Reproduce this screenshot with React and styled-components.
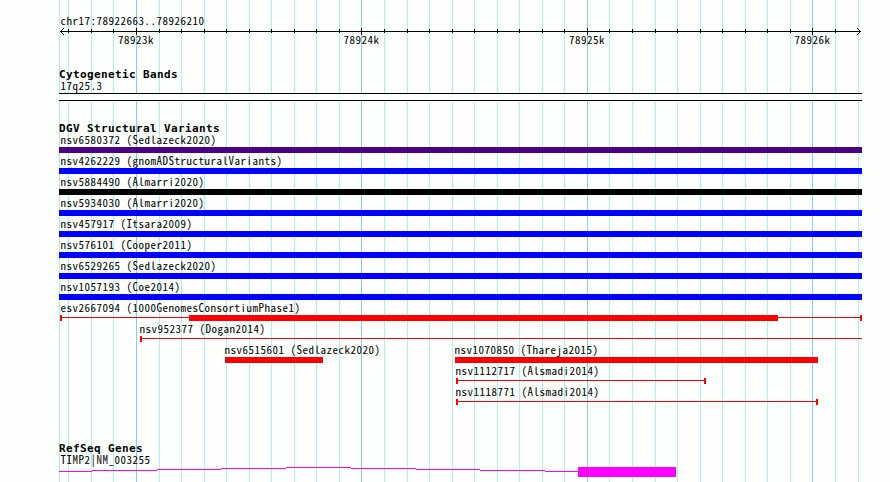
import styled, { createGlobalStyle, css } from 'styled-components';
import React from 'react';

const GlobalStyle = createGlobalStyle`
  body {
    margin: 0;
    background: #fdfffc;
  }
`;

const Browser = styled.div`
  position: relative;
  box-sizing: border-box;
  width: 890px;
  height: 482px;
  padding: 15px 28px 0 59px;
  overflow: hidden;
  background: #fdfffc;
  color: #000;
`;

const GridLines = styled.svg`
  position: absolute;
  top: 0;
  left: 0;
`;

const Content = styled.div`
  position: relative;
`;

const Label = styled.div`
  height: 13px;
  padding-left: 1.6px;
  font-family: 'Noto Sans CJK JP', 'Liberation Mono', monospace;
  font-feature-settings: 'hwid';
  font-size: 11px;
  line-height: 10px;
  letter-spacing: 0.5px;
  white-space: pre;
  ${(props) =>
    props.$shift &&
    css`
      margin-left: ${props.$shift}px;
    `}
`;

const Axis = styled.svg`
  display: block;
`;

const AxisLabels = styled.div`
  display: flex;
  gap: 187.9px;
  height: 13px;
  padding-left: 57.5px;

  ${Label} {
    line-height: 8px;
  }
`;

const Track = styled.section`
  margin-top: ${(props) => props.$top}px;
`;

const Title = styled.h2`
  height: 12px;
  margin: 0;
  font-family: 'DejaVu Sans Mono', monospace;
  font-size: 11px;
  font-weight: bold;
  line-height: 14px;
  letter-spacing: 0.38px;
  white-space: pre;
`;

const Band = styled.div`
  box-sizing: border-box;
  height: 8px;
  border: solid #000;
  border-width: 1px 0;
  background: #fdfffc;
`;

const Row = styled.div`
  display: flex;
  height: 21px;
`;

const Feature = styled.div`
  flex: none;
  width: ${(props) => props.$width}px;
  margin-left: ${(props) => props.$gap}px;
`;

const Glyph = styled.div`
  display: flex;
  height: 6px;
`;

const Bar = styled.div`
  width: ${(props) => props.$width}px;
  height: 6px;
  background: ${(props) => props.$color};
`;

const Line = styled.div`
  width: ${(props) => props.$width}px;
  height: 1px;
  margin-top: 2px;
  background: #f0000a;
`;

const Cap = styled.div`
  width: 2px;
  height: 6px;
  background: #ff0000;
`;

const Gene = styled.svg`
  display: block;
`;

const MAJOR = [136, 361, 587, 812];
const MINOR = [
  68, 91, 113, 159, 181, 204, 226, 249, 271, 294, 316, 339, 384, 407, 429, 452,
  474, 497, 519, 542, 564, 609, 632, 655, 677, 700, 722, 745, 767, 790, 835,
];

const bar = (width, color = '#ff0000') => ({ type: 'bar', width, color });
const line = (width) => ({ type: 'line', width });
const cap = { type: 'cap' };

const full = (name, color) => [
  { name, gap: 0, width: 803, parts: [bar(803, color)] },
];

// gap is the distance from the end of the previous feature in the row
const rows = [
  full('nsv6580372 (Sedlazeck2020)', '#4b0082'),
  full('nsv4262229 (gnomADStructuralVariants)', '#0000ff'),
  full('nsv5884490 (Almarri2020)', '#000000'),
  full('nsv5934030 (Almarri2020)', '#0000ff'),
  full('nsv457917 (Itsara2009)', '#0000ff'),
  full('nsv576101 (Cooper2011)', '#0000ff'),
  full('nsv6529265 (Sedlazeck2020)', '#0000ff'),
  full('nsv1057193 (Coe2014)', '#0000ff'),
  [
    {
      name: 'esv2667094 (1000GenomesConsortiumPhase1)',
      gap: 1,
      width: 802,
      shift: -1,
      parts: [cap, line(127), bar(589), line(82), cap],
    },
  ],
  [
    {
      name: 'nsv952377 (Dogan2014)',
      gap: 81,
      width: 722,
      shift: -2,
      parts: [cap, line(720)],
    },
  ],
  [
    {
      name: 'nsv6515601 (Sedlazeck2020)',
      gap: 166,
      width: 98,
      shift: -2,
      parts: [bar(98)],
    },
    {
      name: 'nsv1070850 (Thareja2015)',
      gap: 132,
      width: 363,
      shift: -2,
      parts: [bar(363)],
    },
  ],
  [
    {
      name: 'nsv1112717 (Alsmadi2014)',
      gap: 397,
      width: 250,
      shift: -2,
      parts: [cap, line(246), cap],
    },
  ],
  [
    {
      name: 'nsv1118771 (Alsmadi2014)',
      gap: 397,
      width: 362,
      shift: -2,
      parts: [cap, line(358), cap],
    },
  ],
];

function Variant({ name, gap, width, shift, parts }) {
  return (
    <Feature $gap={gap} $width={width}>
      <Label $shift={shift}>{name}</Label>
      <Glyph>
        {parts.map((part, i) => {
          if (part.type === 'cap') return <Cap key={i} />;
          if (part.type === 'line') return <Line key={i} $width={part.width} />;
          return <Bar key={i} $width={part.width} $color={part.color} />;
        })}
      </Glyph>
    </Feature>
  );
}

function Ruler() {
  return (
    <>
      <Axis width="803" height="7" shapeRendering="crispEdges">
        <rect x="1" y="3" width="801" height="1" />
        {MINOR.map((x) => (
          <rect key={x} x={x - 59} y="1" width="1" height="4" />
        ))}
        {MAJOR.map((x) => (
          <rect key={x} x={x - 59} y="0" width="1" height="7" />
        ))}
        <path d="M2 2h1v1h-1zM3 1h1v1h-1zM4 0h1v1h-1zM2 4h1v1h-1zM3 5h1v1h-1zM4 6h1v1h-1z" />
        <path d="M800 2h1v1h-1zM799 1h1v1h-1zM798 0h1v1h-1zM800 4h1v1h-1zM799 5h1v1h-1zM798 6h1v1h-1z" />
      </Axis>
      <AxisLabels>
        {['78923k', '78924k', '78925k', '78926k'].map((text) => (
          <Label key={text}>{text}</Label>
        ))}
      </AxisLabels>
    </>
  );
}

function App() {
  return (
    <>
      <GlobalStyle />
      <Browser>
        <GridLines width="890" height="482" shapeRendering="crispEdges">
          {[59, ...MINOR, 858].map((x) => (
            <rect key={x} x={x} y="0" width="1" height="482" fill="#afeeee" />
          ))}
          {MAJOR.map((x) => (
            <rect key={x} x={x} y="0" width="1" height="482" fill="#87ceeb" />
          ))}
        </GridLines>
        <Content>
          <Label>chr17:78922663..78926210</Label>
          <Ruler />
          <Track $top={20}>
            <Title>Cytogenetic Bands</Title>
            <Label>17q25.3</Label>
            <Band />
          </Track>
          <Track $top={21}>
            <Title>DGV Structural Variants</Title>
            {rows.map((row) => (
              <Row key={row[0].name}>
                {row.map((feature) => (
                  <Variant key={feature.name} {...feature} />
                ))}
              </Row>
            ))}
          </Track>
          <Track $top={35}>
            <Title>RefSeq Genes</Title>
            <Label>TIMP2|NM_003255</Label>
            <Gene width="803" height="10" fill="#ff00ff" shapeRendering="crispEdges">
              <path d="M0 4h33v1h-33zM33 3h65v1h-65zM98 2h64v1h-64zM162 1h65v1h-65zM227 0h65v1h-65zM292 1h65v1h-65zM357 2h64v1h-64zM421 3h65v1h-65zM486 4h33v1h-33z" />
              <rect x="519" y="0" width="98" height="10" />
            </Gene>
          </Track>
        </Content>
      </Browser>
    </>
  );
}

export default App;
